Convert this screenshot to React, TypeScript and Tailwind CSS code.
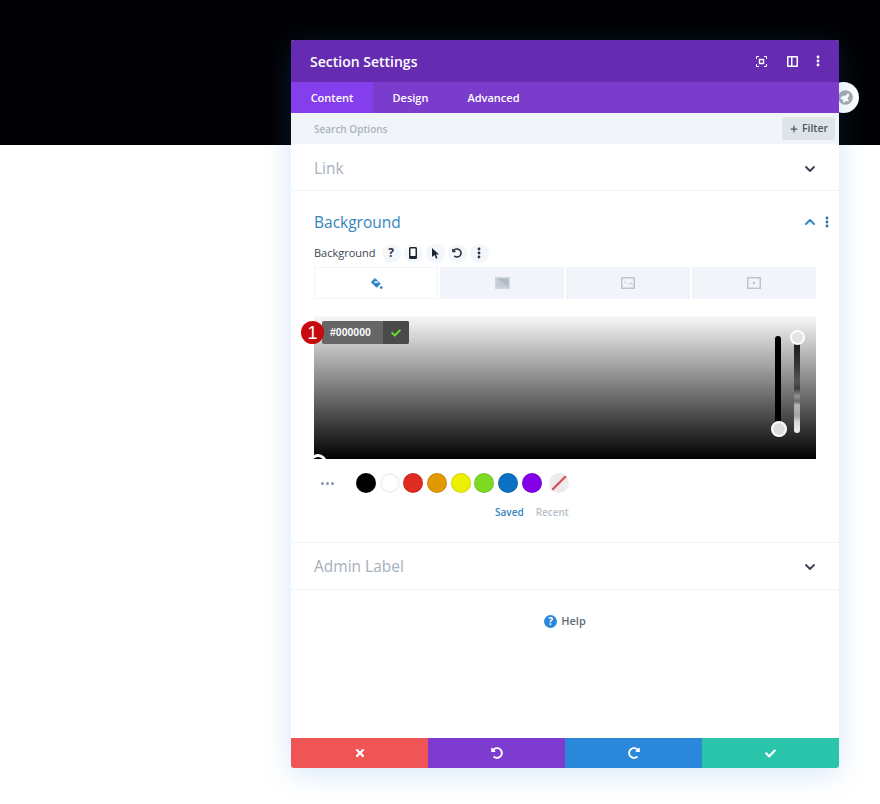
import React from "react";
import { ChevronDown, ChevronUp, Plus } from "lucide-react";
import { FaCheck, FaTimes, FaUndoAlt, FaRedoAlt } from "react-icons/fa";

function Dots({ className = "" }: { className?: string }) {
  return (
    <svg width="4" height="12" viewBox="0 0 4 12" className={className} fill="currentColor">
      <circle cx="2" cy="2" r="1.4" />
      <circle cx="2" cy="6" r="1.4" />
      <circle cx="2" cy="10" r="1.4" />
    </svg>
  );
}

function RoundIcon({ children }: { children: React.ReactNode }) {
  return <span className="w-[19px] h-[19px] rounded-full bg-[#f3f6fa] flex items-center justify-center text-[#2b3440]">{children}</span>;
}

const swatches = ["bg-[#000000]", "bg-[#ffffff] border-2 border-black/5", "bg-[#e02b20] border border-black/10", "bg-[#e09900] border border-black/10", "bg-[#edf000] border border-black/10", "bg-[#7cda24] border border-black/10", "bg-[#0c71c3] border border-black/10", "bg-[#8300e9] border border-black/10"];

function CollapsedRow({ title, className = "" }: { title: string; className?: string }) {
  return (
    <div className={`h-[47px] px-[23px] flex items-center justify-between border-b border-[#eff2f6] ${className}`}>
      <span className="text-[15.5px] text-[#a5b0bd] mt-[2px]">{title}</span>
      <ChevronDown size={16} strokeWidth={2.8} className="text-[#3a4450] mr-[-2px] mt-[2px]" />
    </div>
  );
}

export default function App() {
  return (
    <div className="relative w-[880px] h-[804px] bg-white overflow-hidden font-['Open_Sans',sans-serif]">
      <div className="h-[145px] bg-[#000003]" />

      <div className="absolute left-[828px] top-[82px] w-[31px] h-[31px] rounded-full bg-white flex items-center justify-end pr-[6px]">
        <svg width="15" height="15" viewBox="0 0 16 16">
          <circle cx="8" cy="8" r="7.8" fill="#a8a8ad" />
          <path d="M5 6l3 0 3-3 1 3-2 3 2 3-4 0-2 2-1-4-3-1z" fill="#ffffff" />
        </svg>
      </div>

      <div className="absolute left-[291px] top-[40px] w-[548px] h-[728px] flex flex-col bg-white rounded-[3px] shadow-[0_5px_30px_rgba(43,135,218,0.2)]">
        <div className="h-[42px] shrink-0 bg-[#652cb2] rounded-t-[3px] pl-[19px] pr-[19px] flex items-center justify-between text-white">
          <span className="text-[14px] font-semibold">Section Settings</span>
          <div className="flex items-center">
            <svg width="11" height="11" viewBox="0 0 11 11" fill="none" stroke="white" strokeWidth="1">
              <path d="M0.5 3V0.5H3M8 0.5H10.5V3M10.5 8V10.5H8M3 10.5H0.5V8" />
              <rect x="3.5" y="3.5" width="4" height="4" strokeWidth="1.4" />
            </svg>
            <svg width="11" height="11" viewBox="0 0 11 11" className="ml-[20px]">
              <rect width="11" height="11" rx="1" fill="white" />
              <rect x="1.5" y="1.5" width="2.5" height="8" fill="#652cb2" />
              <rect x="5.5" y="1.5" width="4" height="8" fill="#652cb2" />
            </svg>
            <Dots className="text-white ml-[18px]" />
          </div>
        </div>

        <div className="h-[31px] shrink-0 bg-[#7b3bcb] flex text-white text-[11px] font-semibold">
          <div className="w-[82px] pt-[2px] bg-[#853eec] flex items-center justify-center">Content</div>
          <div className="w-[75px] pt-[2px] flex items-center justify-center">Design</div>
          <div className="w-[91px] pt-[2px] flex items-center justify-center">Advanced</div>
        </div>

        <div className="h-[31px] shrink-0 bg-[#f1f5f9] pl-[23px] pr-[4px] flex items-center justify-between">
          <span className="text-[10px] font-semibold text-[#a8b2be] mt-[1px]">Search Options</span>
          <div className="w-[53px] h-[23px] bg-[#dfe4ea] rounded-[2px] flex items-center justify-center gap-[3px] text-[#4d5763] text-[10.5px] font-semibold">
            <Plus size={10} strokeWidth={3} />
            Filter
          </div>
        </div>

        <CollapsedRow title="Link" className="pt-[2px]" />

        <div className="px-[23px] pt-[20px] h-[352px] shrink-0 border-b border-[#eff2f6]">
          <div className="flex items-center justify-between h-[22px]">
            <span className="text-[15.5px] text-[#3385bb] mt-[2px]">Background</span>
            <div className="flex items-center gap-[7px] mr-[-13px]">
              <ChevronUp size={16} strokeWidth={2.8} className="text-[#2b87c8]" />
              <Dots className="text-[#2b6f9f]" />
            </div>
          </div>

          <div className="flex items-center gap-[3px] mt-[10px] h-[20px]">
            <span className="text-[11px] text-[#3c4652] mr-[3px]">Background</span>
            <RoundIcon><span className="text-[12px] font-bold leading-none">?</span></RoundIcon>
            <RoundIcon>
              <svg width="8" height="12" viewBox="0 0 8 12"><rect x="0" y="0" width="8" height="12" rx="1.5" fill="#1d2530" /><rect x="1.5" y="1.5" width="5" height="7.5" fill="white" /></svg>
            </RoundIcon>
            <RoundIcon>
              <svg width="9" height="11" viewBox="0 0 9 11"><path d="M1 0l7 6.5H5l1.5 3.5-1.5.7L3.6 7 1 9z" fill="#1d2530" /></svg>
            </RoundIcon>
            <RoundIcon><FaUndoAlt size={10} /></RoundIcon>
            <RoundIcon><Dots /></RoundIcon>
          </div>

          <div className="grid grid-cols-4 gap-[2px] mt-[4px] h-[32px]">
            <div className="bg-white border border-[#f1f5f9] flex items-center justify-center">
              <svg width="13" height="13" viewBox="0 0 13 13" fill="none">
                <path d="M5 1.5l5.2 5.2-3.6 3.6L1.4 5.1z" fill="#2b87c8" stroke="#2b87c8" />
                <path d="M4.4 5.2l3.6 0" stroke="white" strokeWidth="1.4" />
                <circle cx="11.3" cy="10.6" r="1.4" fill="#2b87c8" />
              </svg>
            </div>
            <div className="bg-[#f1f5f9] flex items-center justify-center">
              <svg width="15" height="12" viewBox="0 0 15 12"><rect width="15" height="12" fill="#d0d6dd" /><path d="M1.5 1.5H13.5V10.5z" fill="#b0bac5" /><path d="M1.5 1.5L13.5 10.5H1.5z" fill="#c3cbd4" /></svg>
            </div>
            <div className="bg-[#f1f5f9] flex items-center justify-center">
              <svg width="14" height="12" viewBox="0 0 14 12" fill="none" stroke="#bcc5cf"><rect x="0.75" y="0.75" width="12.5" height="10.5" strokeWidth="1.5" /><path d="M3 4.5l2.5 2M7.5 8l2.8-2.2 1 1.5" /></svg>
            </div>
            <div className="bg-[#f1f5f9] flex items-center justify-center">
              <svg width="14" height="12" viewBox="0 0 14 12" fill="none"><rect x="0.75" y="0.75" width="12.5" height="10.5" stroke="#bcc5cf" strokeWidth="1.5" /><path d="M6 4l2.5 2L6 8z" fill="#bcc5cf" /></svg>
            </div>
          </div>

          <div className="relative mt-[17px] h-[143px] bg-[linear-gradient(to_bottom,#f8f8f8,#000000)] overflow-hidden">
            <div className="absolute left-[-5px] top-[138px] w-[18px] h-[18px] rounded-full border-[3px] border-white" />
            <div className="absolute left-[461px] top-[20px] w-[6px] h-[93px] bg-black rounded-full" />
            <div className="absolute left-[457px] top-[105px] w-[16px] h-[16px] rounded-full bg-[#dddddd] border-2 border-white" />
            <div className="absolute left-[480px] top-[24px] w-[6px] h-[93px] rounded-full bg-[linear-gradient(to_bottom,#1a1a1a_0%,#333333_25%,#555555_45%,#3c3c3c_52%,#909090_60%,#6e6e6e_66%,#b5b5b5_70%,#a5a5a5_82%,#d8d8d8_88%,#f0f0f0_100%)]" />
            <div className="absolute left-[476px] top-[14px] w-[15px] h-[15px] rounded-full bg-[#e4e4e4] border-2 border-white" />
          </div>

          <div className="flex items-center h-[20px] mt-[14px]">
            <div className="w-[42px] pl-[7px] flex gap-[2px]">
              {[0, 1, 2].map((i) => <span key={i} className="w-[3px] h-[3px] rounded-full bg-[#8a97a7]" />)}
            </div>
            <div className="flex gap-[3.7px]">
              {swatches.map((s) => <span key={s} className={`w-[20px] h-[20px] rounded-full ${s}`} />)}
              <span className="ml-[3px] w-[20px] h-[20px] rounded-full bg-[#ececec] overflow-hidden flex items-center justify-center">
                <svg width="20" height="20" viewBox="0 0 20 20"><path d="M3 17L17 3" stroke="#d9535b" strokeWidth="2.4" /></svg>
              </span>
            </div>
          </div>

          <div className="flex gap-[12px] mt-[12px] ml-[181px] text-[10px] font-semibold">
            <span className="text-[#3385bb]">Saved</span>
            <span className="text-[#b6bfc9]">Recent</span>
          </div>
        </div>

        <CollapsedRow title="Admin Label" />

        <div className="flex-1 flex justify-center pt-[22px]">
          <div className="flex items-center gap-[4px] h-[18px]">
            <span className="w-[13px] h-[13px] rounded-full bg-[#2b87da] flex items-center justify-center text-white text-[10px] font-bold leading-none">?</span>
            <span className="text-[11px] font-semibold text-[#5f6b78]">Help</span>
          </div>
        </div>

        <div className="h-[30px] shrink-0 flex text-white rounded-b-[3px] overflow-hidden">
          <div className="w-[137px] bg-[#ef5555] flex items-center justify-center"><FaTimes size={12} /></div>
          <div className="w-[137px] bg-[#7e3bd0] flex items-center justify-center"><FaUndoAlt size={12} /></div>
          <div className="w-[137px] bg-[#2b87da] flex items-center justify-center"><FaRedoAlt size={12} /></div>
          <div className="w-[137px] bg-[#29c4a9] flex items-center justify-center"><FaCheck size={11} /></div>
        </div>
      </div>

      <div className="absolute left-[322px] top-[321px] w-[87px] h-[23px] rounded-[2px] bg-[#666666] flex items-center text-white text-[10.5px] font-bold font-['Liberation_Sans',sans-serif]">
        <span className="w-[61px] pl-[8px]">#000000</span>
        <span className="flex-1 h-full bg-[#4a4a4a] rounded-r-[2px] flex items-center justify-center">
          <FaCheck size={10} className="text-[#6bdc2c]" />
        </span>
      </div>
      <div className="absolute left-[301px] top-[321px] w-[23px] h-[23px] rounded-full bg-[#c80a0f] flex items-center justify-center text-white text-[18px] leading-none font-['Liberation_Sans',sans-serif]">1</div>
    </div>
  );
}
